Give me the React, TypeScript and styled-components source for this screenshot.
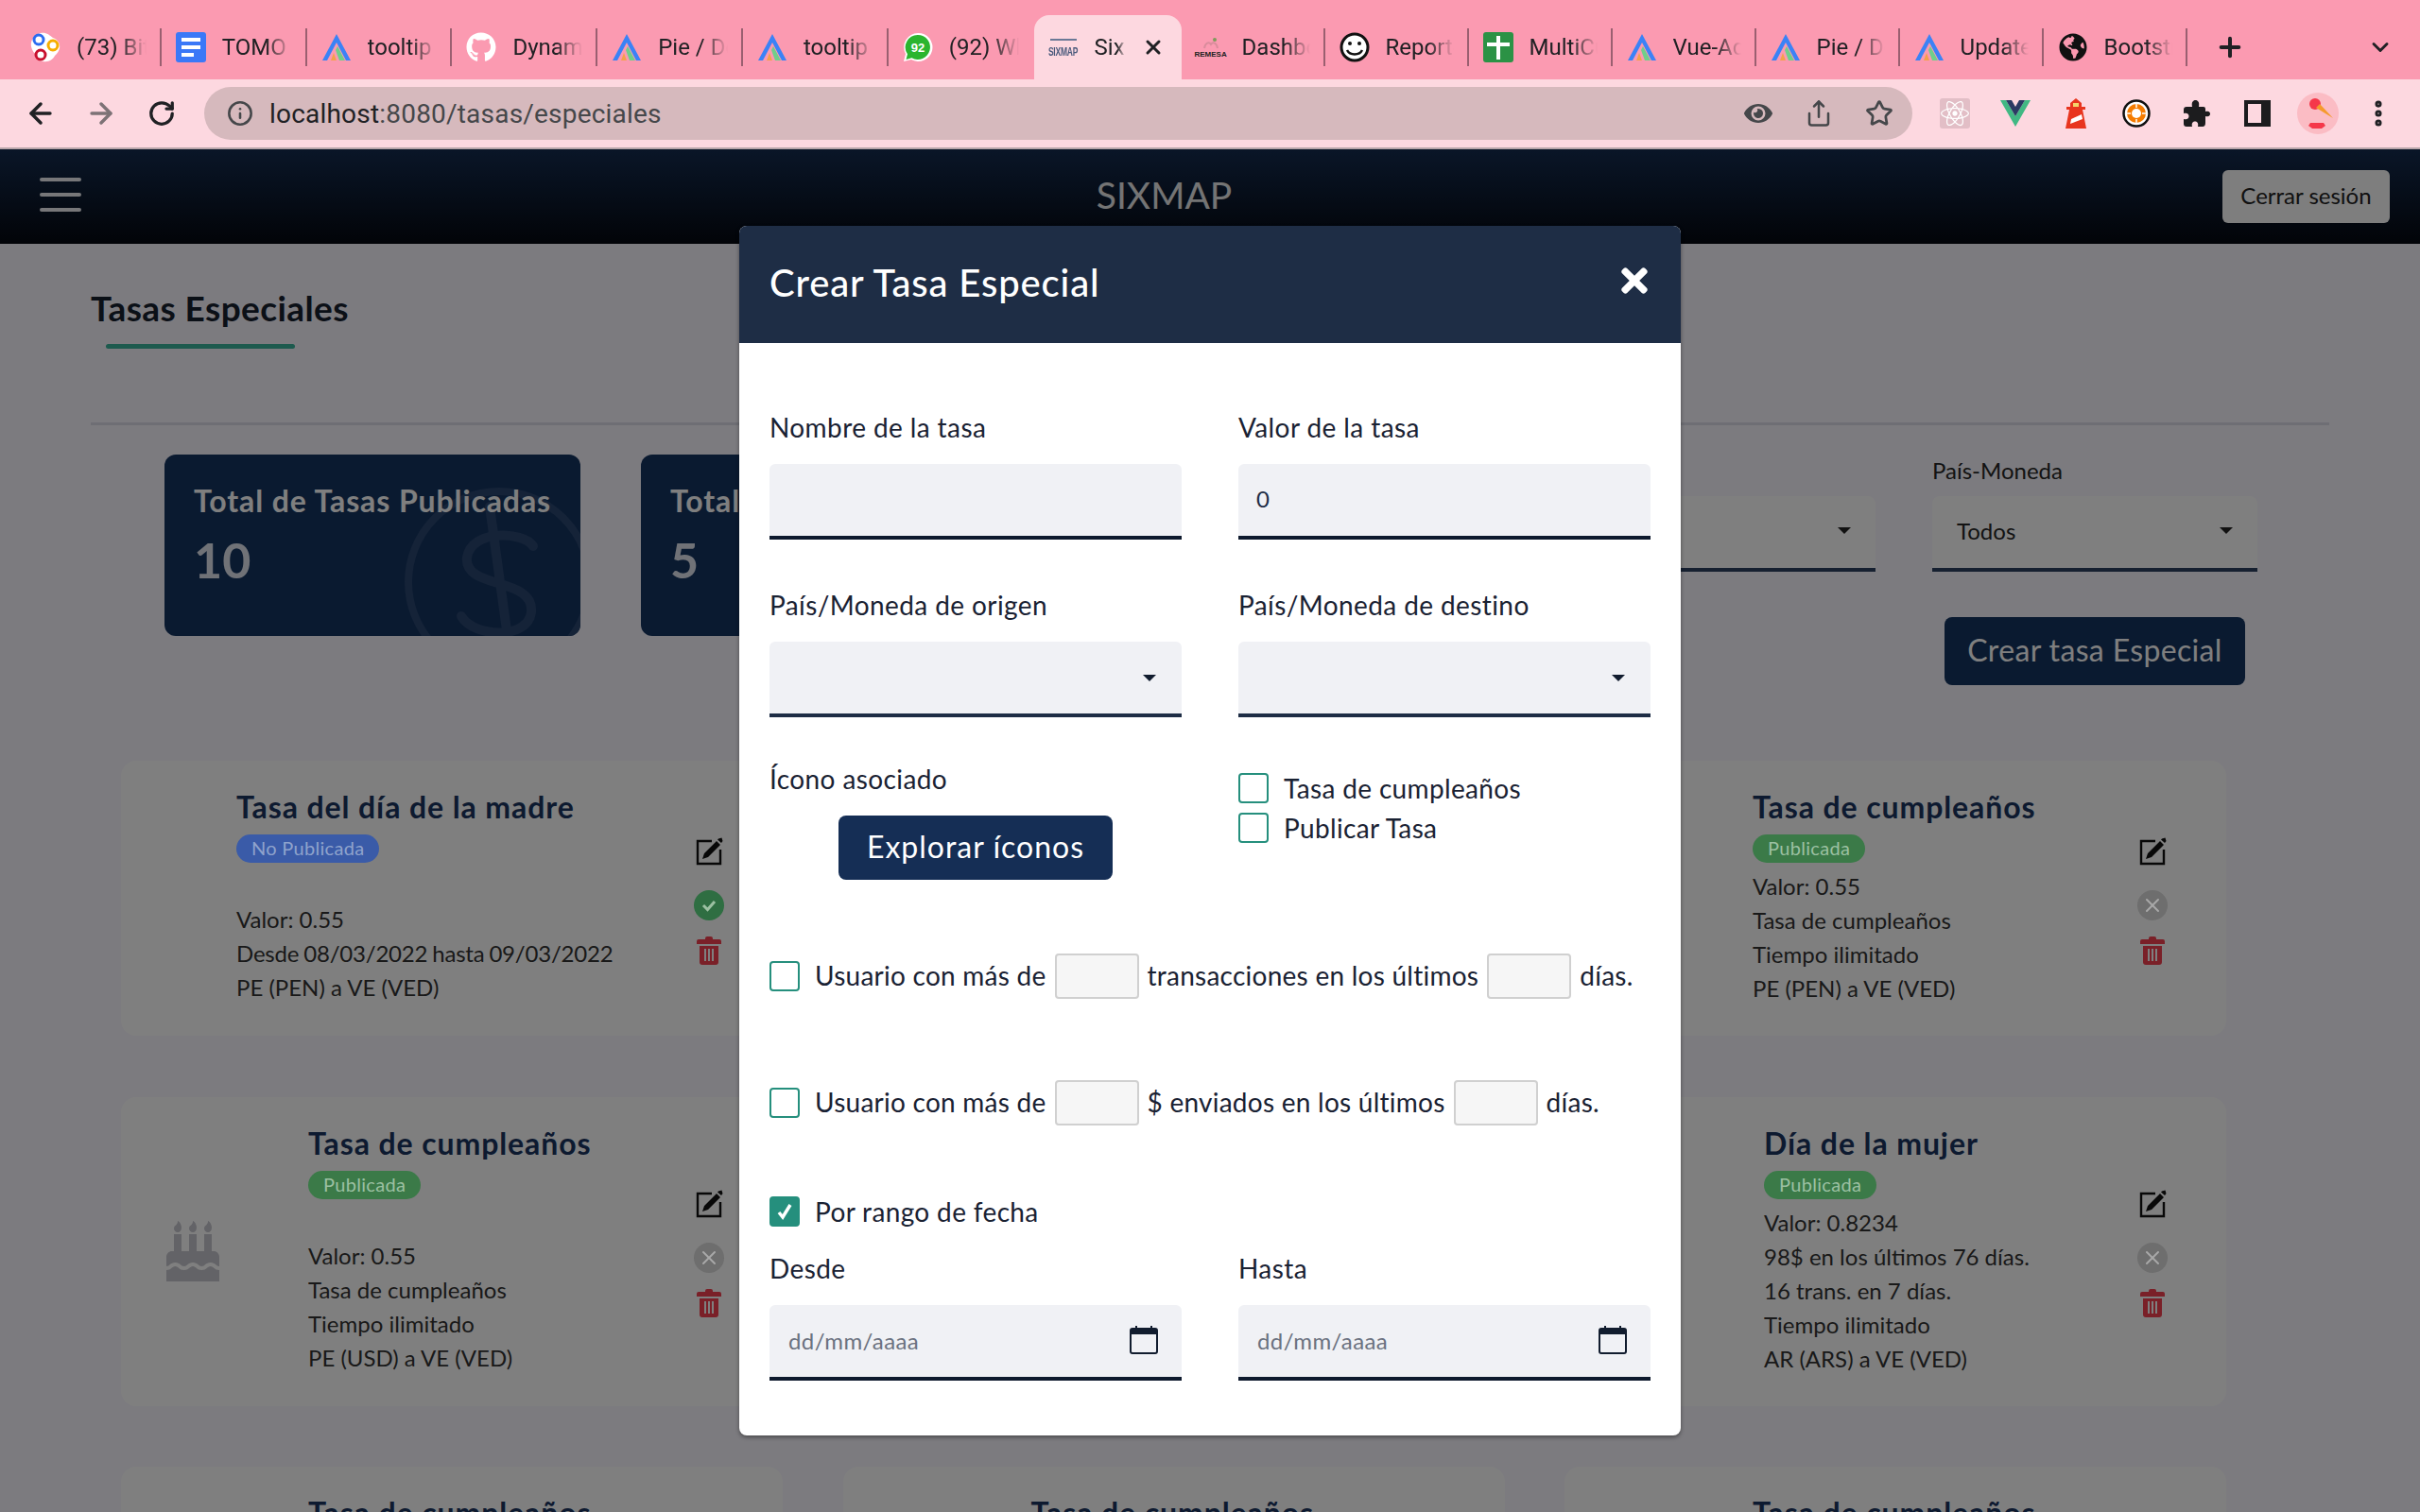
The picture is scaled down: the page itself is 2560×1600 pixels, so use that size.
import React from 'react'
import styled, { createGlobalStyle } from 'styled-components'
import { ArrowLeft, ArrowRight, RotateCw, Info, Share, Star, Plus, ChevronDown, X, EllipsisVertical } from 'lucide-react'
import { FaGithub, FaBirthdayCake, FaGlobeAmericas, FaEye, FaTimes, FaReact } from 'react-icons/fa'

const PAGE_FONT = `Lato, "Open Sans", sans-serif`
const CHROME_FONT = `Roboto, "Liberation Sans", sans-serif`

const GlobalStyle = createGlobalStyle`
  html, body {
    margin: 0;
    padding: 0;
    background: #f8f6ff;
  }
  * { box-sizing: border-box; }
  #root {
    width: 2560px;
    height: 1600px;
    overflow: hidden;
  }
`

const Screen = styled.div`
  width: 2560px;
  height: 1600px;
  display: flex;
  flex-direction: column;
  font-family: ${PAGE_FONT};
`

/* ---------- barra de pestañas ---------- */

const TabBar = styled.div`
  height: 84px;
  background: #fb9ab1;
  display: flex;
  align-items: flex-end;
  padding: 0 28px 0 17px;
  font-family: ${CHROME_FONT};
`

const Tab = styled.div<{ $active?: boolean; $w: number }>`
  width: ${p => p.$w}px;
  height: 68px;
  display: flex;
  align-items: center;
  background: ${p => (p.$active ? '#fdd8e0' : 'transparent')};
  border-radius: 16px 16px 0 0;
`

const TabInner = styled.div<{ $sep?: boolean }>`
  width: 100%;
  height: 40px;
  display: flex;
  align-items: center;
  gap: 17px;
  padding-left: 15px;
  border-right: 2px solid ${p => (p.$sep ? '#9a5f70' : 'transparent')};
`

const TabLabel = styled.span<{ $active?: boolean }>`
  flex: 1;
  margin-right: ${p => (p.$active ? '0' : '14px')};
  font-size: 24px;
  color: #202124;
  white-space: nowrap;
  overflow: hidden;
  -webkit-mask-image: linear-gradient(to right, #000 ${p => (p.$active ? '72%' : '62%')}, transparent 100%);
  mask-image: linear-gradient(to right, #000 ${p => (p.$active ? '72%' : '62%')}, transparent 100%);
`

const TabClose = styled.span`
  display: flex;
  margin-right: 16px;
  color: #202124;
`

const FavSlot = styled.span`
  width: 32px;
  height: 32px;
  flex: none;
  display: flex;
  flex-direction: column;
  align-items: center;
  justify-content: center;
`

const ReactFav = styled(FavSlot)`
  background: #e2bec6;
  border-radius: 3px;
`

const TabPlus = styled.span`
  display: flex;
  height: 68px;
  align-items: center;
  margin-left: 29px;
  color: #202124;
`

const TabChevron = styled.span`
  display: flex;
  height: 68px;
  align-items: center;
  margin-left: auto;
  color: #202124;
`

const SixmapLogo = styled.span`
  font-family: "Liberation Sans", sans-serif;
  font-size: 8.500px;
  font-weight: 700;
  line-height: 10px;
  letter-spacing: -0.2px;
  color: #4a5a7c;
  transform: scaleY(1.500);
  margin-top: 6px;
`

const SixmapBar = styled.span`
  width: 28px;
  height: 2px;
  background: #6a7896;
`

const RemesaLogo = styled.span`
  font-family: "Liberation Sans", sans-serif;
  font-size: 8px;
  font-weight: 700;
  line-height: 9px;
  color: #222;
`

/* ---------- barra de dirección ---------- */

const Toolbar = styled.div`
  height: 74px;
  background: #fdd8e0;
  border-bottom: 2px solid #b9a5aa;
  display: flex;
  align-items: center;
  padding: 0 12px 0 11px;
  font-family: ${CHROME_FONT};
`

const ToolSlot = styled.span<{ $tone?: string }>`
  width: 64px;
  height: 56px;
  flex: none;
  display: flex;
  align-items: center;
  justify-content: center;
  color: ${p => p.$tone ?? '#202124'};
`

const Omnibox = styled.div`
  width: 1807px;
  height: 56px;
  margin: 0 13px;
  padding: 0 3px 0 24px;
  border-radius: 28px;
  background: #d6b9bd;
  display: flex;
  align-items: center;
  color: #45474a;
`

const UrlText = styled.span`
  font-size: 28px;
  letter-spacing: 0.2px;
  color: #45474a;
  flex: 1;
  margin-left: 17px;
`

const UrlHost = styled.span`
  color: #202124;
`

const AvatarCircle = styled.span`
  width: 44px;
  height: 44px;
  border-radius: 50%;
  background: #fbbcc4;
  display: flex;
  align-items: center;
  justify-content: center;
`

/* ---------- página ---------- */

const Page = styled.div`
  flex: 1;
  position: relative;
  overflow: hidden;
  background: #f8f6ff;
`

const Navbar = styled.div`
  height: 100px;
  padding: 0 32px 4px 42px;
  background: linear-gradient(to bottom, #142c50, #040810);
  display: flex;
  align-items: center;
  justify-content: space-between;
`

const Burger = styled.div`
  width: 44px;
  display: flex;
  flex-direction: column;
  gap: 12px;
`

const BurgerLine = styled.span`
  height: 4px;
  border-radius: 2px;
  background: #eeeff2;
`

const Brand = styled.div`
  font-size: 39px;
  font-weight: 400;
  color: #e8e8e8;
  margin-left: 26px;
`

const LogoutButton = styled.button`
  width: 177px;
  height: 56px;
  margin-top: 4px;
  padding: 0 0 3px;
  border: none;
  border-radius: 6px;
  background: #fcfcfc;
  color: #222;
  font: 400 24px ${PAGE_FONT};
`

const Content = styled.div`
  padding: 46px 96px 0;
`

const PageTitle = styled.h1`
  margin: 0;
  font-size: 37px;
  line-height: 44px;
  letter-spacing: 0.4px;
  font-weight: 700;
  color: #16202e;
`

const TitleUnderline = styled.div`
  width: 200px;
  height: 5px;
  margin: 16px 0 0 16px;
  border-radius: 3px;
  background: #3ab49c;
`

const Divider = styled.div`
  height: 3px;
  margin-top: 78px;
  background: #dcdce8;
`

const TopRow = styled.div`
  display: flex;
  justify-content: space-between;
  margin-top: 31px;
  padding: 0 76px 0 78px;
`

const Stats = styled.div`
  display: flex;
  gap: 64px;
`

const StatCard = styled.div`
  width: 440px;
  height: 192px;
  padding: 29px 0 0 31px;
  border-radius: 12px;
  background: #143460;
  position: relative;
  overflow: hidden;
`

const StatTitle = styled.div`
  position: relative;
  font-size: 32px;
  line-height: 40px;
  letter-spacing: 0.9px;
  font-weight: 700;
  color: #fff;
  white-space: nowrap;
`

const StatValue = styled.div`
  position: relative;
  margin-top: 11px;
  font-size: 52px;
  line-height: 62px;
  font-weight: 700;
  color: #e0e4ee;
`

const StatWatermark = styled.svg`
  position: absolute;
  left: 254px;
  top: 35px;
`

const Filters = styled.div`
  display: flex;
  gap: 60px;
`

const FilterColumn = styled.div`
  width: 344px;
  display: flex;
  flex-direction: column;
  align-items: center;
`

const FilterLabel = styled.div`
  align-self: flex-start;
  margin-top: 2px;
  font-size: 24px;
  line-height: 30px;
  color: #262626;
`

const FilterSelect = styled.div`
  width: 100%;
  height: 80px;
  margin-top: 12px;
  padding: 0 26px 4px;
  border-radius: 8px 8px 0 0;
  border-bottom: 4px solid #2c4060;
  background: #fff;
  display: flex;
  align-items: center;
  justify-content: space-between;
  font-size: 24px;
  color: #262626;
`

const Caret = styled.span<{ $dark?: boolean }>`
  width: 0;
  height: 0;
  border-left: 7px solid transparent;
  border-right: 7px solid transparent;
  border-top: 7px solid ${p => (p.$dark ? '#111c2e' : '#222')};
`

const CreateButton = styled.button`
  width: 318px;
  height: 72px;
  margin-top: 48px;
  padding: 0 0 3px;
  border: none;
  border-radius: 8px;
  background: #143460;
  color: #fff;
  font: 400 32px ${PAGE_FONT};
  letter-spacing: 0.35px;
`

const CardGrid = styled.div`
  display: grid;
  grid-template-columns: repeat(3, 700px);
  column-gap: 63.500px;
  row-gap: 64.500px;
  margin-top: 80px;
  padding-left: 32px;
`

const Card = styled.div`
  display: flex;
  border-radius: 16px;
  background: #fff;
`

const CardIconSlot = styled.div<{ $indent: number }>`
  width: ${p => p.$indent}px;
  flex: none;
  padding-left: 44px;
  display: flex;
  align-items: center;
  color: #c6c6ce;
`

const CardBody = styled.div`
  flex: 1;
  padding: 29px 0 32px;
`

const CardTitle = styled.div`
  font-size: 32px;
  line-height: 40px;
  letter-spacing: 0.9px;
  font-weight: 700;
  color: #1a3560;
`

/* lleva su color ya atenuado: queda por encima del fondo oscuro */
const Badge = styled.span<{ $published: boolean }>`
  display: inline-block;
  position: relative;
  z-index: 2;
  height: 30px;
  margin-top: 9px;
  padding: 0 16px 1px;
  border-radius: 15px;
  background: ${p => (p.$published ? '#3b7a48' : '#3a5ba8')};
  color: ${p => (p.$published ? '#9cc0a2' : '#8fa3cc')};
  font-size: 20px;
  line-height: 29px;
  letter-spacing: 0.3px;
  vertical-align: top;
`

const CardLines = styled.div<{ $spaced: boolean }>`
  margin-top: ${p => (p.$spaced ? '42px' : '7px')};
  font-size: 24px;
  line-height: 36px;
  color: #333;
`

const DesdeLine = styled.div`
  letter-spacing: -0.2px;
  word-spacing: -1px;
`

const CardActions = styled.div`
  width: 32px;
  flex: none;
  margin-right: 62px;
  padding-top: 5px;
  display: flex;
  flex-direction: column;
  align-items: center;
  justify-content: center;
`

const ActionEdit = styled.svg`
  width: 29px;
  height: 30px;
`

const ActionToggle = styled.span<{ $on: boolean }>`
  position: relative;
  z-index: 2;
  width: 32px;
  height: 32px;
  margin: 26px 0 17px;
  border-radius: 50%;
  background: ${p => (p.$on ? '#2f6e42' : '#6e6e6e')};
  color: ${p => (p.$on ? '#9cc0a2' : '#a8a8a8')};
  display: flex;
  align-items: center;
  justify-content: center;
`

const ActionTrash = styled.svg`
  width: 26px;
  height: 30px;
`

const Backdrop = styled.div`
  position: absolute;
  inset: 0;
  z-index: 1;
  background: rgba(0, 0, 0, 0.5);
`

/* ---------- modal ---------- */

const Modal = styled.div`
  position: absolute;
  z-index: 3;
  left: 782px;
  top: 81px;
  width: 996px;
  border-radius: 8px;
  overflow: hidden;
  background: #fff;
  box-shadow: 0 2px 4px rgba(0, 0, 0, 0.4);
`

const ModalHeader = styled.div`
  height: 124px;
  background: #1e2d45;
  display: flex;
  align-items: center;
  justify-content: space-between;
  padding: 0 29px 4px 32px;
  color: #fff;
`

const ModalTitle = styled.div`
  font-size: 40px;
  letter-spacing: 0.85px;
  font-weight: 500;
  color: #fff;
`

const ModalClose = styled.span`
  display: flex;
  margin-bottom: 4px;
`

const ModalBody = styled.div`
  padding: 71px 32px 58px;
  color: #1a2233;
  letter-spacing: 0.25px;
`

const TwoCols = styled.div<{ $top?: number }>`
  display: grid;
  grid-template-columns: 436px 436px;
  column-gap: 60px;
  margin-top: ${p => p.$top ?? 0}px;
`

const Field = styled.div`
  display: flex;
  flex-direction: column;
`

const FieldLabel = styled.div`
  font-size: 28px;
  line-height: 37px;
  letter-spacing: 0.4px;
  margin-bottom: 20px;
`

const TextBox = styled.input`
  width: 100%;
  height: 80px;
  padding: 0 19px 4px;
  border: none;
  border-bottom: 4px solid #0e1a2e;
  border-radius: 6px 6px 0 0;
  outline: none;
  background: #f0f1f5;
  color: #1e2d45;
  font: 400 24px ${PAGE_FONT};
`

const SelectBox = styled.div`
  height: 80px;
  padding: 0 27px 0 0;
  border-bottom: 4px solid #1e2d45;
  border-radius: 6px 6px 0 0;
  background: #f0f1f5;
  display: flex;
  align-items: center;
  justify-content: flex-end;
`

const DateBox = styled.div`
  height: 80px;
  padding: 0 25px 2px 20px;
  border-bottom: 4px solid #0e1a2e;
  border-radius: 6px 6px 0 0;
  background: #f0f1f5;
  display: flex;
  align-items: center;
  justify-content: space-between;
  color: #6b7280;
  font-size: 24px;
  letter-spacing: 0.4px;
`

const ExploreButton = styled.button`
  width: 290px;
  height: 68px;
  align-self: center;
  padding: 0 0 3px;
  border: none;
  border-radius: 8px;
  background: #152e55;
  color: #fff;
  font: 400 32px ${PAGE_FONT};
  letter-spacing: 1px;
`

const CheckColumn = styled.div`
  display: flex;
  flex-direction: column;
  gap: 10px;
  padding-top: 12px;
`

const CheckRow = styled.div<{ $top?: number }>`
  display: flex;
  align-items: center;
  gap: 16px;
  font-size: 28px;
  line-height: 30px;
  height: 32px;
  letter-spacing: 0.35px;
  margin-top: ${p => p.$top ?? 0}px;
`

const CheckBox = styled.span<{ $checked?: boolean }>`
  width: 32px;
  height: 32px;
  flex: none;
  border-radius: 4px;
  border: 2px solid #258f7d;
  background: ${p => (p.$checked ? '#258f7d' : '#fff')};
  color: #fff;
  display: flex;
  align-items: center;
  justify-content: center;
`

const InlineRow = styled.div<{ $top: number }>`
  height: 48px;
  margin-top: ${p => p.$top}px;
  display: flex;
  align-items: center;
  font-size: 28px;
  white-space: nowrap;
`

const InlineText = styled.span`
  margin: 0 9px;
  padding-bottom: 2px;
`

const InlineLead = styled(InlineText)`
  margin-left: 16px;
`

const MiniInput = styled.input`
  width: 89px;
  height: 48px;
  padding: 0;
  border: 2px solid #d0d0d0;
  border-radius: 4px;
  outline: none;
  background: #f6f6f6;
`

/* ---------- iconos dibujados ---------- */

const BitIcon = () => (
  <svg width="32" height="32" viewBox="0 0 32 32">
    <path d="M11 1c6-1 9 2 13 5 5 2 8 6 7 11-1 4-3 6-5 8-2 4-7 7-12 6-5 0-8-3-8-7-3-3-6-8-5-13 1-5 5-9 10-10z" fill="#fff" />
    <circle cx="9" cy="8" r="5" fill="#fff" stroke="#2c6cf0" strokeWidth="3" />
    <circle cx="24" cy="14" r="5" fill="#fff" stroke="#f6ad00" strokeWidth="3" />
    <circle cx="11" cy="24" r="5" fill="#fff" stroke="#c8102e" strokeWidth="3" />
  </svg>
)

const DocIcon = () => (
  <svg width="32" height="32" viewBox="0 0 32 32">
    <rect width="32" height="32" rx="3" fill="#3b78f7" />
    <rect x="6" y="6" width="20" height="4" fill="#fff" />
    <rect x="6" y="14" width="20" height="4" fill="#fff" />
    <rect x="6" y="22" width="13" height="4" fill="#fff" />
  </svg>
)

const VueAdminIcon = () => (
  <svg width="32" height="32" viewBox="0 0 32 32">
    <path d="M16 2 L31 30 L26 30 L16 11 L6 30 L1 30 Z" fill="#3b82f6" />
    <path d="M17 15 L25 30 L19 30 L15 19 Z" fill="#6fcf8a" />
    <path d="M13 22 L16 30 L10 30 Z" fill="#f4a14a" />
  </svg>
)

const WhatsappIcon = () => (
  <svg width="32" height="32" viewBox="0 0 32 32">
    <path d="M16 1a15 15 0 1 1-7 28l-8 2 2-8A15 15 0 0 1 16 1z" fill="#fff" />
    <path d="M16 3a13 13 0 1 1-6.500 24.300L3.500 29 5 23.300A13 13 0 0 1 16 3z" fill="#2bb52f" />
    <text x="16" y="21" fontFamily="Liberation Sans" fontSize="13" fontWeight="700" fill="#fff" textAnchor="middle">92</text>
  </svg>
)

const SmileIcon = () => (
  <svg width="32" height="32" viewBox="0 0 32 32">
    <circle cx="16" cy="16" r="14" fill="#fff" stroke="#111" strokeWidth="3" />
    <circle cx="11" cy="12" r="2" fill="#111" />
    <circle cx="21" cy="12" r="2" fill="#111" />
    <path d="M8 19c3 6 13 6 16 0" fill="none" stroke="#111" strokeWidth="2.500" />
  </svg>
)

const SheetIcon = () => (
  <svg width="32" height="32" viewBox="0 0 32 32">
    <rect width="32" height="32" rx="3" fill="#2b9245" />
    <rect x="14" y="4" width="4" height="25" fill="#fff" />
    <rect x="4" y="11" width="24" height="4" fill="#fff" />
  </svg>
)

const SixmapFav = () => (
  <>
    <SixmapBar />
    <SixmapLogo>SIXMAP</SixmapLogo>
  </>
)

const RemesaFav = () => (
  <>
    <svg width="20" height="14" viewBox="0 0 20 14">
      <path d="M3 12 C4 6 8 5 10 8 C12 5 16 6 17 12" fill="none" stroke="#d98c9c" strokeWidth="2" />
      <circle cx="14" cy="3" r="2" fill="#7f9a5c" />
    </svg>
    <RemesaLogo>REMESA</RemesaLogo>
  </>
)

const VueExt = () => (
  <svg width="32" height="28" viewBox="0 0 32 28">
    <path d="M0 0 L6 0 L16 17 L26 0 L32 0 L16 28 Z" fill="#41b883" />
    <path d="M6 0 L12 0 L16 7 L20 0 L26 0 L16 17 Z" fill="#2b3a63" />
  </svg>
)

const LighthouseExt = () => (
  <svg width="22" height="32" viewBox="0 0 22 32">
    <path d="M11 0 L17 5 L17 9 L21 9 L21 12 L18 12 L22 32 L0 32 L4 12 L1 12 L1 9 L5 9 L5 5 Z" fill="#e8351e" />
    <rect x="8" y="5" width="6" height="4" fill="#f5d36a" />
    <path d="M6 22 L17 17 L18 22 L5 27 Z" fill="#fff" />
  </svg>
)

const TargetExt = () => (
  <svg width="30" height="30" viewBox="0 0 30 30">
    <circle cx="15" cy="15" r="13.500" fill="#fff" stroke="#111" strokeWidth="2.500" />
    <circle cx="15" cy="15" r="10" fill="#f57c00" />
    <circle cx="15" cy="15" r="5" fill="#fff" />
    <path d="M15 5v4M15 21v4M5 15h4M21 15h4" stroke="#fff" strokeWidth="1.500" />
  </svg>
)

const PuzzleExt = () => (
  <svg width="28" height="28" viewBox="0 0 28 28">
    <path d="M3 7 H9 C8 2 10 0 12.500 0 C15 0 17 2 16 7 H21 Q23 7 23 9 V12 C27 11 28 13 28 14.500 C28 16 27 18 23 17 V24 Q23 28 20 28 H15 C16 24 14 22.500 12 22.500 C10 22.500 8 24 9 28 H3 Q0 28 0 25 V20 C4 21 5.500 19 5.500 17 C5.500 15 4 13 0 14 V10 Q0 7 3 7 Z" fill="#1c1c1e" />
  </svg>
)

const PanelExt = () => (
  <svg width="28" height="28" viewBox="0 0 28 28">
    <path d="M0 0 H28 V28 H0 Z M4 4 V24 H18 V4 Z" fill="#1c1c1e" fillRule="evenodd" />
  </svg>
)

const AvatarArt = () => (
  <svg width="44" height="44" viewBox="0 0 44 44">
    <circle cx="19" cy="12" r="6" fill="#f5384a" />
    <path d="M20 16 L24 12 L38 27 Z" fill="#f59a2c" />
    <path d="M14 32 H28 L30 35 L26 38 H16 L12 35 Z" fill="#f5384a" />
  </svg>
)

const EditIcon = () => (
  <ActionEdit viewBox="0 0 29 30">
    <path d="M17 4 H2 V28 H26 V13" fill="none" stroke="#111" strokeWidth="2.400" />
    <path d="M22 4 L26 8 L13 21 L7 23 L9 17 Z M24 1.500 L27.500 0.500 L28.500 4 L27 6 L23 2.500 Z" fill="#111" />
  </ActionEdit>
)

const TrashIcon = () => (
  <ActionTrash viewBox="0 0 26 30">
    <path d="M9 2 Q9 0 11 0 H15 Q17 0 17 2 V3 H24 Q26 3 26 5 V8 H0 V5 Q0 3 2 3 H9 Z" fill="#f44050" />
    <path fillRule="evenodd" d="M3 10 H23 V27 Q23 30 20 30 H6 Q3 30 3 27 Z M8 13 V26 H10 V13 Z M12 13 V26 H14 V13 Z M16 13 V26 H18 V13 Z" fill="#f44050" />
  </ActionTrash>
)

const CalendarIcon = () => (
  <svg width="30" height="30" viewBox="0 0 30 30">
    <rect x="1" y="3" width="28" height="26" rx="2" fill="none" stroke="#111c2e" strokeWidth="2" />
    <rect x="1" y="3" width="28" height="6" fill="#111c2e" />
    <rect x="6" y="0" width="2" height="4" fill="#111c2e" />
    <rect x="22" y="0" width="2" height="4" fill="#111c2e" />
  </svg>
)

const CheckMark = () => (
  <svg width="22" height="22" viewBox="0 0 22 22">
    <path d="M5 12 L9 17 L17 4" fill="none" stroke="#fff" strokeWidth="3.500" />
  </svg>
)

/* ---------- datos ---------- */

const tabs: { label: string; icon: React.ReactNode; active?: boolean; noSep?: boolean }[] = [
  { label: '(73) Bitbucket', icon: <BitIcon /> },
  { label: 'TOMO 1', icon: <DocIcon /> },
  { label: 'tooltip', icon: <VueAdminIcon /> },
  { label: 'Dynamic', icon: <FaGithub size={32} color="#fff" /> },
  { label: 'Pie / Donut', icon: <VueAdminIcon /> },
  { label: 'tooltip', icon: <VueAdminIcon /> },
  { label: '(92) WhatsApp', icon: <WhatsappIcon />, noSep: true },
  { label: 'Sixmap', icon: <SixmapFav />, active: true, noSep: true },
  { label: 'Dashboard', icon: <RemesaFav /> },
  { label: 'Reporte', icon: <SmileIcon /> },
  { label: 'MultiCurrency', icon: <SheetIcon /> },
  { label: 'Vue-Admin', icon: <VueAdminIcon /> },
  { label: 'Pie / Donut', icon: <VueAdminIcon /> },
  { label: 'Update', icon: <VueAdminIcon /> },
  { label: 'Bootstrap', icon: <FaGlobeAmericas size={30} color="#111" /> },
]

const tabWidth = (i: number) => (i < 7 ? 153.8 : i === 7 ? 156 : 152)

type Tasa = {
  title: string
  published: boolean
  lines: string[]
  indent: number
  spaced: boolean
  cake?: boolean
}

const tasas: Tasa[] = [
  { title: 'Tasa del día de la madre', published: false, indent: 122, spaced: true, lines: ['Valor: 0.55', 'Desde 08/03/2022 hasta 09/03/2022', 'PE (PEN) a VE (VED)'] },
  { title: 'Tasa de cumpleaños', published: true, indent: 199, spaced: false, lines: ['Valor: 0.55', 'Tasa de cumpleaños', 'Tiempo ilimitado', 'PE (PEN) a VE (VED)'] },
  { title: 'Tasa de cumpleaños', published: true, indent: 199, spaced: false, lines: ['Valor: 0.55', 'Tasa de cumpleaños', 'Tiempo ilimitado', 'PE (PEN) a VE (VED)'] },
  { title: 'Tasa de cumpleaños', published: true, indent: 198, spaced: true, cake: true, lines: ['Valor: 0.55', 'Tasa de cumpleaños', 'Tiempo ilimitado', 'PE (USD) a VE (VED)'] },
  { title: 'Tasa de cumpleaños', published: true, indent: 199, spaced: true, lines: ['Valor: 0.55', 'Tasa de cumpleaños', 'Tiempo ilimitado', 'PE (USD) a VE (VED)'] },
  { title: 'Día de la mujer', published: true, indent: 211, spaced: false, lines: ['Valor: 0.8234', '98$ en los últimos 76 días.', '16 trans. en 7 días.', 'Tiempo ilimitado', 'AR (ARS) a VE (VED)'] },
  { title: 'Tasa de cumpleaños', published: true, indent: 198, spaced: true, lines: ['Valor: 0.55', 'Tasa de cumpleaños', 'Tiempo ilimitado', 'PE (USD) a VE (VED)'] },
  { title: 'Tasa de cumpleaños', published: true, indent: 199, spaced: true, lines: ['Valor: 0.55', 'Tasa de cumpleaños', 'Tiempo ilimitado', 'PE (USD) a VE (VED)'] },
  { title: 'Tasa de cumpleaños', published: true, indent: 199, spaced: true, lines: ['Valor: 0.55', 'Tasa de cumpleaños', 'Tiempo ilimitado', 'PE (USD) a VE (VED)'] },
]

const BrowserChrome = () => (
  <>
    <TabBar>
      {tabs.map((tab, i) => (
        <Tab key={i} $active={tab.active} $w={tabWidth(i)}>
          <TabInner $sep={!tab.noSep}>
            <FavSlot>{tab.icon}</FavSlot>
            <TabLabel $active={tab.active}>{tab.label}</TabLabel>
            {tab.active && (
              <TabClose>
                <X size={24} strokeWidth={3} />
              </TabClose>
            )}
          </TabInner>
        </Tab>
      ))}
      <TabPlus>
        <Plus size={32} strokeWidth={3} />
      </TabPlus>
      <TabChevron>
        <ChevronDown size={28} strokeWidth={2.500} />
      </TabChevron>
    </TabBar>
    <Toolbar>
      <ToolSlot><ArrowLeft size={34} strokeWidth={2.500} /></ToolSlot>
      <ToolSlot $tone="#7d7276"><ArrowRight size={34} strokeWidth={2.500} /></ToolSlot>
      <ToolSlot><RotateCw size={30} strokeWidth={2.600} /></ToolSlot>
      <Omnibox>
        <Info size={28} strokeWidth={2.200} />
        <UrlText><UrlHost>localhost</UrlHost>:8080/tasas/especiales</UrlText>
        <ToolSlot $tone="#45474a"><FaEye size={30} /></ToolSlot>
        <ToolSlot $tone="#45474a"><Share size={30} strokeWidth={2} /></ToolSlot>
        <ToolSlot $tone="#45474a"><Star size={30} strokeWidth={2.200} /></ToolSlot>
      </Omnibox>
      <ToolSlot>
        <ReactFav>
          <FaReact size={30} color="#fff" />
        </ReactFav>
      </ToolSlot>
      <ToolSlot><VueExt /></ToolSlot>
      <ToolSlot><LighthouseExt /></ToolSlot>
      <ToolSlot><TargetExt /></ToolSlot>
      <ToolSlot><PuzzleExt /></ToolSlot>
      <ToolSlot><PanelExt /></ToolSlot>
      <ToolSlot><AvatarCircle><AvatarArt /></AvatarCircle></ToolSlot>
      <ToolSlot><EllipsisVertical size={34} strokeWidth={3} /></ToolSlot>
    </Toolbar>
  </>
)

const TasaCard = ({ tasa }: { tasa: Tasa }) => (
  <Card>
    <CardIconSlot $indent={tasa.indent}>
      {tasa.cake && <FaBirthdayCake size={64} />}
    </CardIconSlot>
    <CardBody>
      <CardTitle>{tasa.title}</CardTitle>
      <Badge $published={tasa.published}>{tasa.published ? 'Publicada' : 'No Publicada'}</Badge>
      <CardLines $spaced={tasa.spaced}>
        {tasa.lines.map(line =>
          line.startsWith('Desde') ? <DesdeLine key={line}>{line}</DesdeLine> : <div key={line}>{line}</div>
        )}
      </CardLines>
    </CardBody>
    <CardActions>
      <EditIcon />
      <ActionToggle $on={!tasa.published}>
        {tasa.published ? (
          <X size={24} strokeWidth={2} />
        ) : (
          <svg width="20" height="20" viewBox="0 0 20 20">
            <path d="M4 10 L8.500 14.500 L16 6" fill="none" stroke="currentColor" strokeWidth="3" />
          </svg>
        )}
      </ActionToggle>
      <TrashIcon />
    </CardActions>
  </Card>
)

const CrearTasaModal = () => (
  <Modal>
    <ModalHeader>
      <ModalTitle>Crear Tasa Especial</ModalTitle>
      <ModalClose><FaTimes size={40} color="#fff" /></ModalClose>
    </ModalHeader>
    <ModalBody>
      <TwoCols>
        <Field>
          <FieldLabel>Nombre de la tasa</FieldLabel>
          <TextBox readOnly />
        </Field>
        <Field>
          <FieldLabel>Valor de la tasa</FieldLabel>
          <TextBox readOnly value="0" />
        </Field>
      </TwoCols>
      <TwoCols $top={51}>
        <Field>
          <FieldLabel>País/Moneda de origen</FieldLabel>
          <SelectBox><Caret $dark /></SelectBox>
        </Field>
        <Field>
          <FieldLabel>País/Moneda de destino</FieldLabel>
          <SelectBox><Caret $dark /></SelectBox>
        </Field>
      </TwoCols>
      <TwoCols $top={47}>
        <Field>
          <FieldLabel>Ícono asociado</FieldLabel>
          <ExploreButton>Explorar íconos</ExploreButton>
        </Field>
        <CheckColumn>
          <CheckRow><CheckBox />Tasa de cumpleaños</CheckRow>
          <CheckRow><CheckBox />Publicar Tasa</CheckRow>
        </CheckColumn>
      </TwoCols>
      <InlineRow $top={78}>
        <CheckBox />
        <InlineLead>Usuario con más de</InlineLead>
        <MiniInput readOnly />
        <InlineText>transacciones en los últimos</InlineText>
        <MiniInput readOnly />
        <InlineText>días.</InlineText>
      </InlineRow>
      <InlineRow $top={86}>
        <CheckBox />
        <InlineLead>Usuario con más de</InlineLead>
        <MiniInput readOnly />
        <InlineText>$ enviados en los últimos</InlineText>
        <MiniInput readOnly />
        <InlineText>días.</InlineText>
      </InlineRow>
      <CheckRow $top={75}>
        <CheckBox $checked><CheckMark /></CheckBox>
        Por rango de fecha
      </CheckRow>
      <TwoCols $top={26}>
        <Field>
          <FieldLabel>Desde</FieldLabel>
          <DateBox>dd/mm/aaaa<CalendarIcon /></DateBox>
        </Field>
        <Field>
          <FieldLabel>Hasta</FieldLabel>
          <DateBox>dd/mm/aaaa<CalendarIcon /></DateBox>
        </Field>
      </TwoCols>
    </ModalBody>
  </Modal>
)

export default function App() {
  return (
    <Screen>
      <GlobalStyle />
      <BrowserChrome />
      <Page>
        <Navbar>
          <Burger>
            <BurgerLine />
            <BurgerLine />
            <BurgerLine />
          </Burger>
          <Brand>SIXMAP</Brand>
          <LogoutButton>Cerrar sesión</LogoutButton>
        </Navbar>
        <Content>
          <PageTitle>Tasas Especiales</PageTitle>
          <TitleUnderline />
          <Divider />
          <TopRow>
            <Stats>
              <StatCard>
                <StatWatermark width="200" height="200" viewBox="0 0 200 200">
                  <circle cx="100" cy="100" r="96" fill="none" stroke="#2a4670" strokeWidth="8" />
                  <path d="M136 62 C126 46 70 44 66 74 C62 108 138 94 134 132 C130 162 72 158 60 136 M90 20 L112 180" fill="none" stroke="#2a4670" strokeWidth="10" strokeLinecap="round" />
                </StatWatermark>
                <StatTitle>Total de Tasas Publicadas</StatTitle>
                <StatValue>10</StatValue>
              </StatCard>
              <StatCard>
                <StatTitle>Total de Tasas No Publicadas</StatTitle>
                <StatValue>5</StatValue>
              </StatCard>
            </Stats>
            <Filters>
              <FilterColumn>
                <FilterLabel>Estado</FilterLabel>
                <FilterSelect>Todos<Caret /></FilterSelect>
              </FilterColumn>
              <FilterColumn>
                <FilterLabel>País-Moneda</FilterLabel>
                <FilterSelect>Todos<Caret /></FilterSelect>
                <CreateButton>Crear tasa Especial</CreateButton>
              </FilterColumn>
            </Filters>
          </TopRow>
          <CardGrid>
            {tasas.map((tasa, i) => (
              <TasaCard key={i} tasa={tasa} />
            ))}
          </CardGrid>
        </Content>
        <Backdrop />
        <CrearTasaModal />
      </Page>
    </Screen>
  )
}
